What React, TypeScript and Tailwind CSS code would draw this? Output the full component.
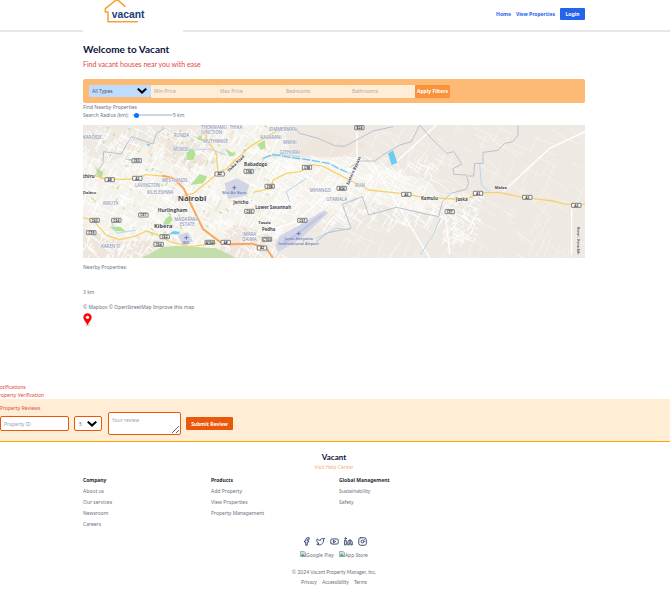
import { Facebook, Instagram, Linkedin, Twitter, Youtube } from "lucide-react";
import type { ReactNode } from "react";

function Chevron({ className }: { className: string }) {
  return (
    <svg viewBox="0 0 10 6" className={className} aria-hidden="true">
      <path d="M0 1.3 1.5 0 5 3 8.5 0 10 1.3 5 6Z" fill="#000" />
    </svg>
  );
}

function Logo() {
  return (
    <svg viewBox="0 0 300 96" className="block h-8 w-[100px]" role="img" aria-label="vacant">
      <rect width="300" height="96" fill="#fff" />
      <path
        d="M163 65H75V36H67V26L102-2 126 19"
        fill="none"
        stroke="#f9a132"
        strokeWidth="4.5"
        strokeLinejoin="round"
        strokeLinecap="round"
      />
      <text x="86" y="53" fontFamily="'Liberation Sans', sans-serif" fontWeight="700" fontSize="31" fill="#17407c">
        vacant
      </text>
    </svg>
  );
}

type Line = [number, number, number, number];

function streets(count: number, x: number, y: number, w: number, h: number, len: number, seed: number): Line[] {
  let s = seed;
  const next = () => {
    s = (s * 16807) % 2147483647;
    return s / 2147483647;
  };
  return Array.from({ length: count }, () => {
    const a = (next() < 0.5 ? 0.35 : 1.9) + next() * 0.4;
    const l = len * (0.3 + next());
    const px = x + next() * w;
    const py = y + next() * h;
    return [px, py, px + Math.cos(a) * l, py + Math.sin(a) * l];
  });
}

const toPath = (lines: Line[]) => lines.map((l) => `M${l.map((n) => Math.round(n)).join(" ")}`).join("");
const cityStreets = toPath(streets(900, 0, 0, 600, 390, 34, 11));
const eastStreets = toPath(streets(420, 580, 90, 480, 200, 42, 37));
const farStreets = toPath(streets(200, 760, 0, 746, 390, 65, 91));
const joskaStreets = toPath(streets(130, 1080, 200, 110, 150, 24, 53));
const greens = streets(80, 0, 0, 560, 330, 9, 71);
const blocks = streets(60, 0, 0, 560, 380, 30, 29);

const towns: [number, number, string, number][] = [
  [284, 228, "Nairobi", 23],
  [224, 262, "Hurlingham", 15],
  [213, 308, "Kibera", 17],
  [0, 160, "thiru", 14],
  [0, 207, "Dalaro", 12],
  [483, 123, "Babadogo", 14],
  [451, 237, "Jericho", 13],
  [517, 253, "Lower Savannah", 13],
  [526, 296, "Tassia", 12],
  [537, 319, "Pedha", 13],
  [1014, 224, "Kamulu", 13],
  [1119, 227, "Joska", 13],
  [1235, 191, "Malaa", 12],
];

const districts: [number, number, string][] = [
  [0, 41, "KAROIDE"],
  [272, 36, "RUNDA"],
  [354, 13, "THOKWAMU"],
  [440, 13, "THIKA"],
  [354, 27, "JUNCTION"],
  [360, 54, "MUTHWAVE"],
  [270, 78, "MURIGI"],
  [156, 186, "LAVINGTON"],
  [237, 171, "WESTLANDS"],
  [192, 207, "KILELESHWA"],
  [60, 239, "KIRUTA"],
  [274, 288, "MADARAKA"],
  [290, 302, "ESTATE"],
  [54, 368, "KAREN O"],
  [559, 18, "ZIMMERMAN"],
  [532, 43, "KASARANI"],
  [600, 57, "MWIKI"],
  [590, 87, "GITHURAI"],
  [680, 200, "MIHANGO"],
  [730, 227, "UTAWALA"],
  [816, 187, "RUAI"],
  [478, 334, "IMARA"],
  [478, 348, "DAIMA"],
];

const shields: [number, number, string][] = [
  [161, 107, "C63"],
  [80, 164, "A8"],
  [163, 160, "A2"],
  [35, 286, "C63"],
  [100, 286, "C64"],
  [181, 270, "C61"],
  [25, 323, "C59"],
  [245, 335, "C62"],
  [227, 358, "C64"],
  [410, 147, "A2"],
  [380, 352, "A104"],
  [428, 352, "A8"],
  [499, 259, "C65"],
  [497, 139, "C98"],
  [672, 127, "C98"],
  [560, 184, "C98"],
  [829, 8, "B24"],
  [776, 190, "B24"],
  [970, 208, "A3"],
  [658, 286, "C61"],
  [552, 343, "C103"],
  [537, 369, "A2"],
  [1185, 205, "A3"],
  [1100, 260, "C97"],
  [1333, 217, "A3"],
  [1480, 241, "A3"],
];

function MapView() {
  return (
    <svg
      viewBox="0 0 1506 399"
      className="block h-auto w-full"
      role="img"
      aria-label="Map of Nairobi"
      fontFamily="'Open Sans', sans-serif"
    >
      <rect width="1506" height="399" fill="#eee9e2" />
      <path d="M0 80 60 120 190 60 330 40 400 0H600L620 70 560 100 820 95 1050 180 1090 240 960 260 820 215 690 300 600 330 480 399H0Z" fill="#f5f2ec" />
      <path d="M250 40 370 30 400 110 320 130 240 105ZM0 310 120 350 230 345 200 399H0ZM440 290 560 330 520 399 400 399ZM720 15 850 60 760 98 640 88Z" fill="#eee5dc" />
      <g stroke="#f2e8d8" strokeWidth="8">
        {blocks.map((b, i) => (
          <line key={i} x1={b[0]} y1={b[1]} x2={b[2]} y2={b[3]} />
        ))}
      </g>
      <g fill="none" stroke="#fff">
        <path d={cityStreets} strokeWidth="3" />
        <path d={eastStreets} strokeWidth="2.5" />
        <path d={farStreets} strokeWidth="1.5" opacity=".8" />
        <path d={joskaStreets} strokeWidth="3" />
        <path d="M822 20V110L750 190 640 290 520 330M1466 250V390M1086 255 1100 390M930 120 1060 0M860 100 1040 399M1260 200 1400 70 1506 20" strokeWidth="4" />
      </g>
      <g stroke="#b9e2a0" strokeWidth="5" opacity=".8">
        {greens.map((g, i) => (
          <line key={i} x1={g[0]} y1={g[1]} x2={g[2]} y2={g[3]} />
        ))}
      </g>
      <g fill="#b5e196">
        <path d="M309 85 328 68 339 88 330 105H313ZM248 282 262 270 270 285 255 299H240ZM322 180 350 147 374 155 360 175ZM39 130 60 140 56 166 44 150ZM80 305H112L130 320 95 318ZM523 58 545 45 548 70 533 75ZM352 30 364 50 340 42ZM425 70 460 90 440 95Z" />
        <path d="M175 399 235 367 280 362 340 366 400 370 460 399Z" fill="#c3deaa" />
      </g>
      <g fill="#d2d5e5">
        <path d="M425 175 462 160 500 180 488 212 435 222ZM285 330 315 322 330 348 300 365ZM577 360 590 333 650 300 725 255 735 265 655 340 585 382Z" />
        <path d="M600 358 720 268" stroke="#c0c6de" strokeWidth="7" />
      </g>
      <g fill="none" stroke="#b4d8ec" strokeWidth="3">
        <path d="M502 150 550 95 600 88 650 95M270 62 330 75 380 72 430 90M85 290 100 325 160 315M620 230 610 200 670 160M1190 115 1195 180 1220 200M1072 280 1050 330 1012 390M700 340 760 310 800 315" />
        <path d="M540 100 570 88 620 97 680 105 740 116 765 130 800 145" stroke="#6bc8ee" strokeWidth="4" strokeDasharray="25 5" />
      </g>
      <path d="M915 86 930 76 943 113 926 121ZM190 56 201 57 198 65ZM270 318 290 320 288 328 258 328ZM125 103H145V107ZM480 75 489 73 485 82Z" fill="#6dcdf0" />
      <g fill="none" stroke="#bcc0cf" strokeWidth="3" strokeLinejoin="round">
        <path d="M35 155 60 115 62 80 115 87 145 35 210 57 220 25 245 10" />
        <path d="M600 10 635 7 650 25 705 40 755 62 785 64 830 40 870 18 930 5" />
        <path d="M800 128 830 108 875 108 900 90 950 60 985 50 1010 0 1045 40 1092 85 1112 80 1137 117 1110 131 1113 148 1150 150 1157 175 1150 192 1105 205 1078 230 1067 275 1020 265 940 247 857 270 838 215 778 238 804 310 735 323 700 350" />
        <path d="M1155 153H1172L1175 115H1200V82L1245 76 1265 55 1290 50 1305 30V0" />
      </g>
      <g fill="none" strokeLinejoin="round">
        <path d="M0 151 40 153 75 164 150 162 190 149 248 154M302 212 330 206 380 165 405 144 430 132 470 94 506 60M405 140 400 85 370 40 370 0M0 278 32 287 70 331 110 344 155 334 190 318 225 330 260 350 320 365 400 355M510 202 565 190 570 165 610 145 650 140 690 119 720 124 780 155 858 195 960 206 1020 217 1115 222 1160 218 1190 203 1250 203 1320 217 1410 228 1450 238H1506M500 65 560 30 595 10" stroke="#f5d36c" strokeWidth="4" />
        <path d="M238 152 272 160 302 190 320 230 360 312 410 350 440 358 506 356 550 370 570 399" stroke="#fba45d" strokeWidth="6" />
      </g>
      {shields.map(([x, y, label], i) => (
        <g key={i}>
          <rect x={x - 14} y={y - 6} width="28" height="12" rx="1" fill="#fff" stroke="#444" strokeWidth="2" />
          <text x={x} y={y + 4} textAnchor="middle" fontSize="10" fontWeight="700" fill="#333">
            {label}
          </text>
        </g>
      ))}
      <g fontWeight="600" fill="#8b94b5" fontSize="13" stroke="#fff" strokeWidth="2" paintOrder="stroke">
        {districts.map(([x, y, label]) => (
          <text key={label} x={x} y={y}>
            {label}
          </text>
        ))}
      </g>
      <g fontWeight="700" fill="#45454d" stroke="#fff" strokeWidth="2" paintOrder="stroke">
        {towns.map(([x, y, label, size]) => (
          <text key={label} x={x} y={y} fontSize={size}>
            {label}
          </text>
        ))}
        <text fontSize="12" transform="translate(438 142) rotate(-45)">Thika Road</text>
        <text fontSize="12" transform="translate(797 180) rotate(-66)">Eastern Bypass</text>
        <text fontSize="10" transform="translate(1483 306) rotate(90)">Kenol - Kona Ath</text>
      </g>
      <g fontWeight="600" fontSize="12" fill="#6d78c4" textAnchor="middle">
        <text x="454" y="206">Moi Air Base</text>
        <text x="310" y="357">WIL</text>
        <text x="647" y="346">Jomo Kenyatta</text>
        <text x="647" y="359">International Airport</text>
        <path d="M454 182V194M448 188H460M310 332V344M304 338H316M647 320V332M641 326H653" stroke="#6d78c4" strokeWidth="3" />
      </g>
    </svg>
  );
}

const fields = ["Min Price", "Max Price", "Bedrooms", "Bathrooms"];

const columns = [
  { title: "Company", links: ["About us", "Our services", "Newsroom", "Careers"] },
  { title: "Products", links: ["Add Property", "View Properties", "Property Management"] },
  { title: "Global Management", links: ["Sustainability", "Safety"] },
];

const social = [
  { name: "Facebook", Icon: Facebook },
  { name: "Twitter", Icon: Twitter },
  { name: "YouTube", Icon: Youtube },
  { name: "LinkedIn", Icon: Linkedin },
  { name: "Instagram", Icon: Instagram },
];

function Container({ children, className = "" }: { children: ReactNode; className?: string }) {
  return (
    <div className="pr-0.5">
      <div className={`mx-auto max-w-[502px] ${className}`}>{children}</div>
    </div>
  );
}

function StoreBadge({ name }: { name: string }) {
  return (
    <a href="#" className="flex items-start">
      <svg viewBox="0 0 16 16" className="size-[6px]" aria-hidden="true">
        <path d="M1 1H11L15 5V15H1Z" fill="#c4dcf5" stroke="#8b939c" strokeWidth="2" />
        <path d="M2 14 7 7 14 14Z" fill="#46a546" />
      </svg>
      {name}
    </a>
  );
}

export default function App() {
  return (
    <div className="overflow-x-hidden bg-white font-['Noto_Sans',sans-serif] text-[5px] leading-[8px] text-[#6b7280]">
      <header className="h-8 border-b-2 border-gray-200">
        <Container className="flex items-start justify-between">
          <Logo />
          <nav className="flex items-center gap-[5px] pt-2 font-bold text-[#2563eb]">
            <a href="#">Home</a>
            <a href="#">View Properties</a>
            <button type="button" className="h-3 w-[25px] rounded-[1px] bg-[#2563eb] text-white">
              Login
            </button>
          </nav>
        </Container>
      </header>

      <main>
        <Container className="pt-[10px]">
          <h1 className="font-['Lato',sans-serif] text-[10px] leading-[14px] font-bold text-[#0b1440]">
            Welcome to Vacant
          </h1>
          <p className="mt-[3px] font-['Lato',sans-serif] text-[7px] leading-[10px] text-[#e2453d]">
            Find vacant houses near you with ease
          </p>

          <form className="mt-[10px] flex h-6 items-center rounded-[2px] bg-[#fdba74] px-[6px]">
            <div className="relative h-3 w-[62px]">
              <select
                aria-label="Property type"
                className="block h-3 w-full appearance-none rounded-[1px] bg-[#bfdbfe] pl-[3px] text-gray-600"
              >
                <option>All Types</option>
              </select>
              <Chevron className="pointer-events-none absolute top-[3px] right-1 h-[6px] w-[10px]" />
            </div>
            {fields.map((f) => (
              <input
                key={f}
                aria-label={f}
                placeholder={f}
                className="h-[13px] w-[66px] rounded-[1px] bg-[#ffedd5] px-[3px] placeholder:text-[#b5aaa3]"
              />
            ))}
            <button type="button" className="h-[13px] w-[35px] rounded-[1px] bg-[#fb923c] font-bold text-white">
              Apply Filters
            </button>
          </form>

          <p>Find Nearby Properties</p>
          <div className="flex items-center">
            <label htmlFor="radius" className="mr-[3px]">
              Search Radius (km):
            </label>
            <input
              id="radius"
              type="range"
              min="1"
              max="100"
              defaultValue="5"
              className="h-[2px] w-[41px] appearance-none rounded-full border border-gray-300 bg-gray-200 [&::-webkit-slider-thumb]:size-[5px] [&::-webkit-slider-thumb]:appearance-none [&::-webkit-slider-thumb]:rounded-full [&::-webkit-slider-thumb]:bg-[#0075ff]"
            />
            <span>5 km</span>
          </div>

          <div className="mt-[6px]">
            <MapView />
          </div>
          <p className="mt-[5px]">Nearby Properties:</p>
          <p className="mt-[17px]">3 km</p>
          <p className="mt-[7px]">
            © <a href="#">Mapbox</a> © <a href="#">OpenStreetMap</a> <a href="#">Improve this map</a>
          </p>
          <svg viewBox="0 0 27 39" className="mt-[2px] block h-[13px] w-[9px]" aria-hidden="true">
            <ellipse cx="14" cy="36" rx="7" ry="2" fill="#bbb" />
            <path d="M13.500 36C9 27 1 22 1 13a12.500 12.500 0 0 1 25 0c0 9-8 14-12.500 23Z" fill="#f00" />
            <circle cx="13.500" cy="13" r="5" fill="#fff" />
          </svg>
        </Container>

        <div className="mt-[57px] -ml-1 text-[#e2453d]">
          <p>Notifications</p>
          <p>Property Verification</p>
        </div>

        <section className="h-[43px] border-b border-[#ffa500] bg-[#ffedd5] pt-[5px]">
          <h2 className="text-[#e2503d]">Property Reviews</h2>
          <form className="flex items-center">
            <input
              aria-label="Property ID"
              placeholder="Property ID"
              className="h-[15px] w-[69px] rounded-[2px] border border-[#ea580c] bg-white px-[3px] placeholder:text-gray-400"
            />
            <div className="relative ml-[5px] h-[15px] w-7">
              <select
                aria-label="Rating"
                className="block h-[15px] w-full appearance-none rounded-[2px] border border-[#ea580c] bg-white pl-1 text-gray-500"
              >
                <option>5</option>
              </select>
              <Chevron className="pointer-events-none absolute top-[5px] right-[5px] h-[6px] w-[10px]" />
            </div>
            <textarea
              aria-label="Your review"
              placeholder="Your review"
              className="ml-[6px] block h-[23px] w-[73px] rounded-[2px] border border-[#ea580c] bg-white px-[3px] py-[3px] placeholder:text-gray-400"
            />
            <button type="button" className="ml-[5px] h-[13px] w-[47px] rounded-[1px] bg-[#ea580c] font-bold text-white">
              Submit Review
            </button>
          </form>
        </section>
      </main>

      <footer>
        <Container className="pt-[10px]">
          <div className="text-center">
            <h2 className="font-['Lato',sans-serif] text-[8px] leading-[11px] font-bold text-[#0b1440]">Vacant</h2>
            <a href="#" className="block text-[#fdaa80]">
              Visit Help Center
            </a>
          </div>
          <div className="mt-[5px] grid grid-cols-4 gap-[10px]">
            {columns.map((c) => (
              <div key={c.title}>
                <h3 className="font-bold text-gray-800">{c.title}</h3>
                <ul className="mt-[3px] flex flex-col gap-[3px]">
                  {c.links.map((l) => (
                    <li key={l} className="leading-[8px]">
                      <a href="#">{l}</a>
                    </li>
                  ))}
                </ul>
              </div>
            ))}
          </div>
          <div className="mt-[9px] flex justify-center gap-[5px] text-[#33416b]">
            {social.map(({ name, Icon }) => (
              <a key={name} href="#" aria-label={name}>
                <Icon className="block size-[9px]" strokeWidth={2.5} />
              </a>
            ))}
          </div>
          <div className="mt-[5px] flex justify-center gap-[5px]">
            <StoreBadge name="Google Play" />
            <StoreBadge name="App Store" />
          </div>
          <div className="font-['Lato',sans-serif]">
            <p className="mt-[9px] text-center">© 2024 Vacant Property Manager, Inc.</p>
            <div className="mt-[2px] flex justify-center gap-[5px] pb-2">
              <a href="#">Privacy</a>
              <a href="#">Accessibility</a>
              <a href="#">Terms</a>
            </div>
          </div>
        </Container>
      </footer>
    </div>
  );
}
